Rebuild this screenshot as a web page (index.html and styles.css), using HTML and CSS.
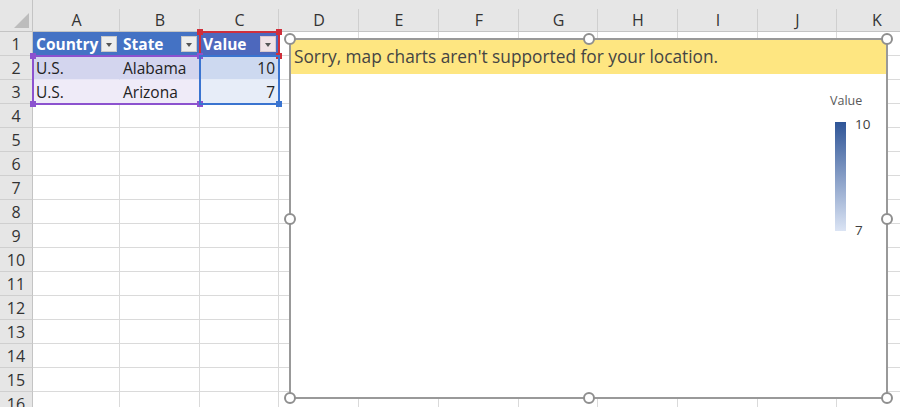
FILE: index.html
```html
<!DOCTYPE html>
<html>
<head>
<meta charset="utf-8">
<link rel="stylesheet" href="styles.css">
</head>
<body>
<div class="sheet">
  <div class="row head">
    <div class="corner"><span class="tri"></span></div>
    <div class="ch ca">A</div><div class="ch">B</div><div class="ch cc">C</div><div class="ch">D</div><div class="ch">E</div><div class="ch">F</div><div class="ch cg">G</div><div class="ch">H</div><div class="ch">I</div><div class="ch cg">J</div><div class="ch">K</div>
  </div>
  <div class="row">
    <div class="rh">1</div>
    <div class="c ca th">Country<span class="dd"><i></i></span></div>
    <div class="c th">State<span class="dd"><i></i></span></div>
    <div class="c cc th thsel">Value<span class="dd ddsel"><i></i></span></div>
    <div class="c"></div><div class="c"></div><div class="c"></div><div class="c cg"></div><div class="c"></div><div class="c"></div><div class="c cg"></div><div class="c"></div>
  </div>
  <div class="row">
    <div class="rh">2</div>
    <div class="c ca b1">U.S.</div>
    <div class="c b1">Alabama</div>
    <div class="c cc v1 num">10</div>
    <div class="c"></div><div class="c"></div><div class="c"></div><div class="c cg"></div><div class="c"></div><div class="c"></div><div class="c cg"></div><div class="c"></div>
  </div>
  <div class="row">
    <div class="rh">3</div>
    <div class="c ca b2">U.S.</div>
    <div class="c b2">Arizona</div>
    <div class="c cc v2 num">7</div>
    <div class="c"></div><div class="c"></div><div class="c"></div><div class="c cg"></div><div class="c"></div><div class="c"></div><div class="c cg"></div><div class="c"></div>
  </div>
  <div class="row"><div class="rh">4</div><div class="c ca"></div><div class="c"></div><div class="c cc"></div><div class="c"></div><div class="c"></div><div class="c"></div><div class="c cg"></div><div class="c"></div><div class="c"></div><div class="c cg"></div><div class="c"></div></div>
  <div class="row"><div class="rh">5</div><div class="c ca"></div><div class="c"></div><div class="c cc"></div><div class="c"></div><div class="c"></div><div class="c"></div><div class="c cg"></div><div class="c"></div><div class="c"></div><div class="c cg"></div><div class="c"></div></div>
  <div class="row"><div class="rh">6</div><div class="c ca"></div><div class="c"></div><div class="c cc"></div><div class="c"></div><div class="c"></div><div class="c"></div><div class="c cg"></div><div class="c"></div><div class="c"></div><div class="c cg"></div><div class="c"></div></div>
  <div class="row"><div class="rh">7</div><div class="c ca"></div><div class="c"></div><div class="c cc"></div><div class="c"></div><div class="c"></div><div class="c"></div><div class="c cg"></div><div class="c"></div><div class="c"></div><div class="c cg"></div><div class="c"></div></div>
  <div class="row"><div class="rh">8</div><div class="c ca"></div><div class="c"></div><div class="c cc"></div><div class="c"></div><div class="c"></div><div class="c"></div><div class="c cg"></div><div class="c"></div><div class="c"></div><div class="c cg"></div><div class="c"></div></div>
  <div class="row"><div class="rh">9</div><div class="c ca"></div><div class="c"></div><div class="c cc"></div><div class="c"></div><div class="c"></div><div class="c"></div><div class="c cg"></div><div class="c"></div><div class="c"></div><div class="c cg"></div><div class="c"></div></div>
  <div class="row"><div class="rh">10</div><div class="c ca"></div><div class="c"></div><div class="c cc"></div><div class="c"></div><div class="c"></div><div class="c"></div><div class="c cg"></div><div class="c"></div><div class="c"></div><div class="c cg"></div><div class="c"></div></div>
  <div class="row"><div class="rh">11</div><div class="c ca"></div><div class="c"></div><div class="c cc"></div><div class="c"></div><div class="c"></div><div class="c"></div><div class="c cg"></div><div class="c"></div><div class="c"></div><div class="c cg"></div><div class="c"></div></div>
  <div class="row"><div class="rh">12</div><div class="c ca"></div><div class="c"></div><div class="c cc"></div><div class="c"></div><div class="c"></div><div class="c"></div><div class="c cg"></div><div class="c"></div><div class="c"></div><div class="c cg"></div><div class="c"></div></div>
  <div class="row"><div class="rh">13</div><div class="c ca"></div><div class="c"></div><div class="c cc"></div><div class="c"></div><div class="c"></div><div class="c"></div><div class="c cg"></div><div class="c"></div><div class="c"></div><div class="c cg"></div><div class="c"></div></div>
  <div class="row"><div class="rh">14</div><div class="c ca"></div><div class="c"></div><div class="c cc"></div><div class="c"></div><div class="c"></div><div class="c"></div><div class="c cg"></div><div class="c"></div><div class="c"></div><div class="c cg"></div><div class="c"></div></div>
  <div class="row"><div class="rh">15</div><div class="c ca"></div><div class="c"></div><div class="c cc"></div><div class="c"></div><div class="c"></div><div class="c"></div><div class="c cg"></div><div class="c"></div><div class="c"></div><div class="c cg"></div><div class="c"></div></div>
  <div class="row"><div class="rh">16</div><div class="c ca"></div><div class="c"></div><div class="c cc"></div><div class="c"></div><div class="c"></div><div class="c"></div><div class="c cg"></div><div class="c"></div><div class="c"></div><div class="c cg"></div><div class="c"></div></div>

  <div class="sel sel-red"><span class="sq s-bl"></span><span class="sq s-tl"></span><span class="sq s-tr"></span><span class="sq s-br"></span></div>
  <div class="sel sel-purple"><span class="sq s-tl"></span><span class="sq s-tr"></span><span class="sq s-bl"></span><span class="sq s-br"></span></div>
  <div class="sel sel-blue"><span class="sq s-br"></span></div>

  <div class="chart">
    <div class="banner">Sorry, map charts aren't supported for your location.</div>
    <div class="legend">
      <div class="lg-title">Value</div>
      <div class="lg-body">
        <div class="lg-bar"></div>
        <div class="lg-labels"><span>10</span><span>7</span></div>
      </div>
    </div>
    <span class="h h-tl"></span><span class="h h-tm"></span><span class="h h-tr"></span>
    <span class="h h-ml"></span><span class="h h-mr"></span>
    <span class="h h-bl"></span><span class="h h-bm"></span><span class="h h-br"></span>
  </div>
</div>
</body>
</html>
```

FILE: styles.css
```css
* { box-sizing: border-box; }
html, body { margin: 0; padding: 0; background: #fff; }
body { width: 900px; height: 407px; overflow: hidden; font-family: "Open Sans", "Noto Sans", sans-serif; }

.sheet { position: relative; width: 900px; height: 407px; overflow: hidden; }

.row { display: flex; height: 24px; }
.row.head { height: 32px; background: #e6e6e6; border-bottom: 1px solid #c4c4c4; }

.corner { width: 33px; flex: none; position: relative; border-right: 1px solid #c4c4c4; }
.tri { position: absolute; right: 3px; bottom: 3px; width: 0; height: 0;
  border-left: 15px solid transparent; border-bottom: 15px solid #bdbdbd; }

.ch { width: 80px; flex: none; display: flex; align-items: center; justify-content: center;
  font-size: 16px; color: #333; padding-top: 8px; position: relative; }
.ch::after { content: ""; position: absolute; right: 0; top: 9px; bottom: 0; width: 1px; background: #cfcfcf; }
.ca { width: 87px !important; }
.cc, .cg { width: 79px !important; }

.rh { width: 33px; flex: none; background: #e6e6e6; border-right: 1px solid #c4c4c4; border-bottom: 1px solid #cfcfcf;
  display: flex; align-items: center; justify-content: center; font-size: 16px; color: #333; }

.c { width: 80px; flex: none; border-right: 1px solid #dadada; border-bottom: 1px solid #dadada;
  font-size: 15.5px; color: #222; display: flex; align-items: center; padding: 0 3px; white-space: nowrap; position: relative; }

.th { background: #4472c4; color: #fff; font-weight: bold; border-right-color: #4472c4; border-bottom-color: #4472c4; }
.thsel { background: #4d68bd; }
.dd { position: absolute; right: 2px; top: 4px; width: 16px; height: 16px; background: #ededed; border: 1px solid #c9c9c9; }
.dd i { position: absolute; left: 4px; top: 6px; width: 0; height: 0;
  border-left: 3.5px solid transparent; border-right: 3.5px solid transparent; border-top: 4px solid #555; }
.ddsel { background: #f0e2e6; border-color: #d9c9cf; }

.b1 { background: #d3d5ee; border-right-color: #d3d5ee; border-bottom-color: #e8e6f6; }
.b2 { background: #efebf8; border-right-color: #efebf8; }
.v1 { background: #cdd9f0; border-bottom-color: #e4ebf7; }
.v2 { background: #e7edf8; }
.num { justify-content: flex-end; }

.sel { position: absolute; }
.sel-red { left: 199px; top: 31px; width: 81px; height: 26px; border: 2px solid #cf2f3b; }
.sel-purple { left: 32px; top: 55px; width: 169px; height: 50px; border: 2px solid #8c52cf; }
.sel-blue { left: 199px; top: 55px; width: 81px; height: 50px; border: 2px solid #3a74d0; }
.sq { position: absolute; width: 6px; height: 6px; }
.sel-red .sq { background: #cf2f3b; }
.sel-purple .sq { background: #8c52cf; }
.sel-blue .sq { background: #3a74d0; }
.s-tl { left: -4px; top: -4px; }
.s-tr { right: -4px; top: -4px; }
.s-bl { left: -4px; bottom: -4px; }
.s-br { right: -4px; bottom: -4px; }

.chart { position: absolute; left: 289px; top: 38px; width: 599px; height: 361px; background: #fff;
  border: 2px solid #999; }
.banner { margin: 0; height: 34px; background: #fee681; color: #444; font-size: 17.3px;
  display: flex; align-items: center; padding-left: 3px; padding-bottom: 1px; }
.legend { position: absolute; left: 538px; top: 52px; width: 50px; }
.lg-title { font-size: 12.5px; color: #595959; margin-left: 1px; }
.lg-body { display: flex; margin-top: 13px; gap: 9px; }
.lg-bar { width: 11px; height: 109px; background: linear-gradient(#2f5597, #dbe4f4); margin-left: 6px; }
.lg-labels { display: flex; flex-direction: column; justify-content: space-between; font-size: 13.5px; color: #404040;
  height: 123px; margin-top: -6px; line-height: 17px; }

.h { position: absolute; width: 12px; height: 12px; border-radius: 50%; background: #fff; border: 2px solid #8f8f8f; }
.h-tl { left: -7px; top: -7px; }
.h-tm { left: 292px; top: -7px; }
.h-tr { right: -7px; top: -7px; }
.h-ml { left: -7px; top: 173px; }
.h-mr { right: -7px; top: 173px; }
.h-bl { left: -7px; bottom: -7px; }
.h-bm { left: 292px; bottom: -7px; }
.h-br { right: -7px; bottom: -7px; }
```
